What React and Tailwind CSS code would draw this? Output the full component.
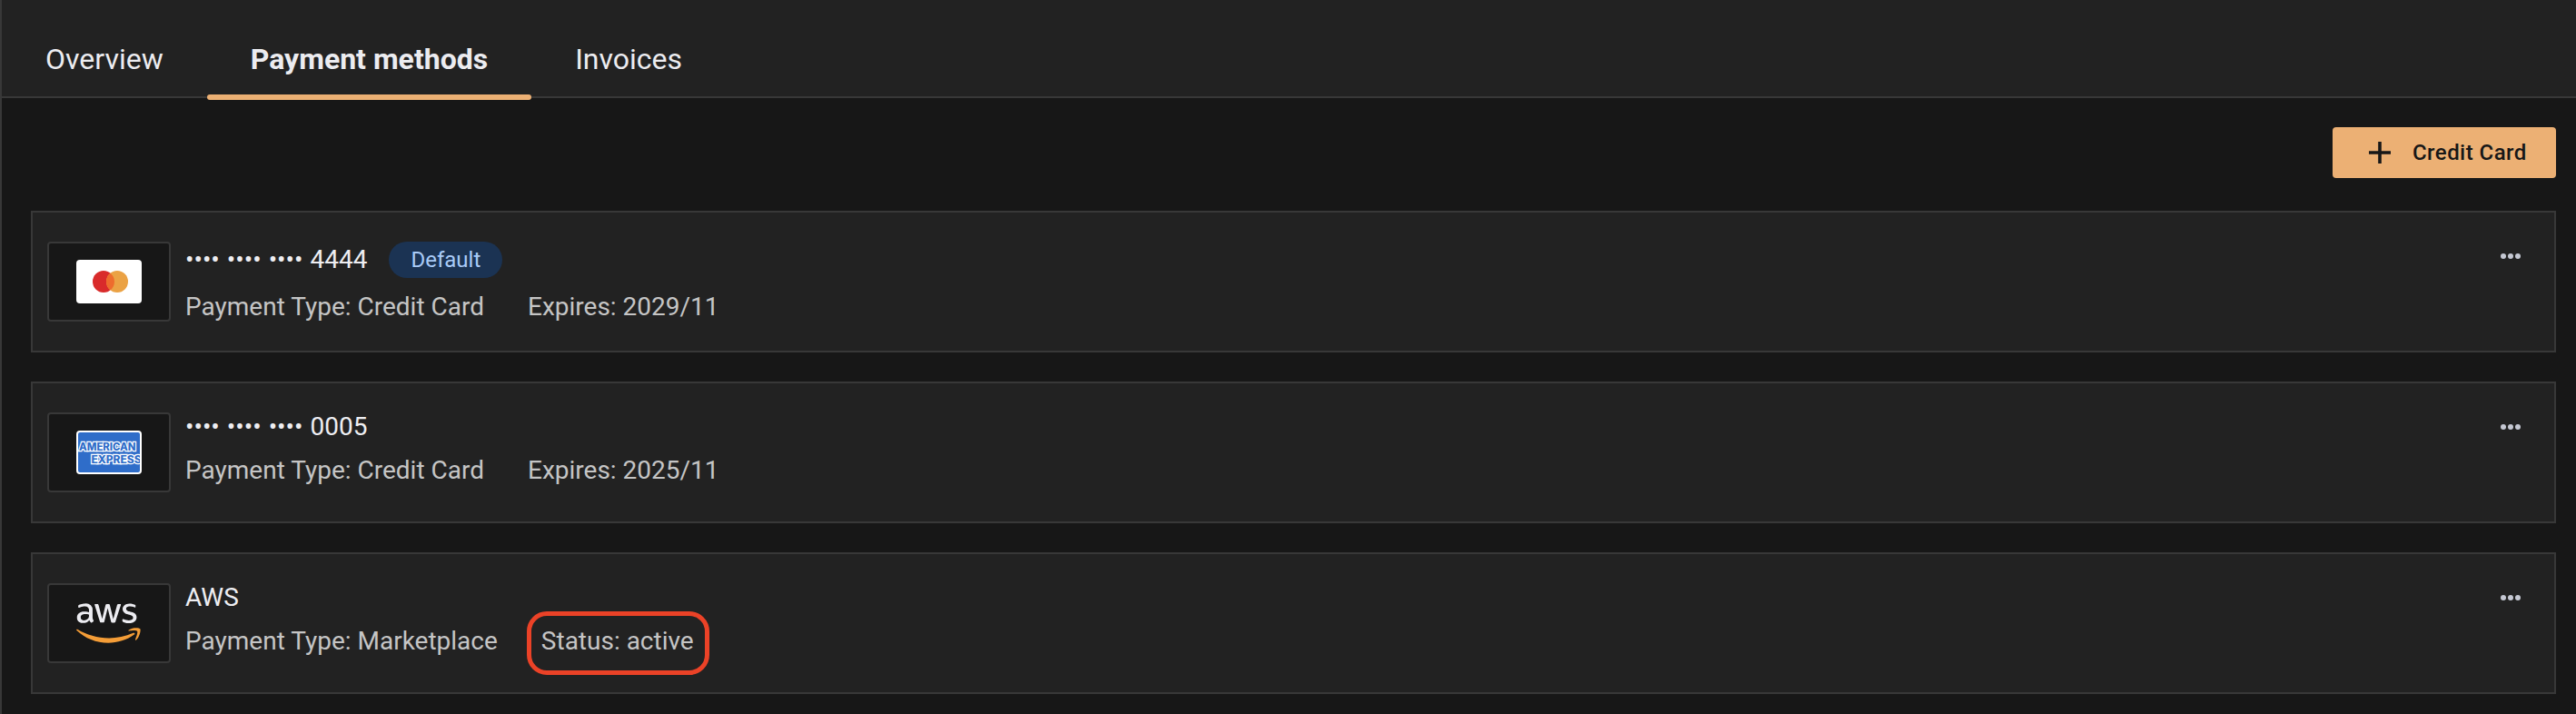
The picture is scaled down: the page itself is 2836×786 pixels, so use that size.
import { FaAws } from "react-icons/fa";

const tabs = [
  { label: "Overview", active: false },
  { label: "Payment methods", active: true },
  { label: "Invoices", active: false },
];

function MastercardLogo() {
  return (
    <svg width="72" height="48" viewBox="0 0 72 48">
      <rect width="72" height="48" rx="4" fill="#fff" />
      <circle cx="30" cy="24" r="12" fill="#d92b2b" />
      <circle cx="45" cy="24" r="12" fill="#eba244" />
      <path d="M37.5 14.63a12 12 0 0 1 0 18.74a12 12 0 0 1 0-18.74z" fill="#ee6c2d" />
    </svg>
  );
}

function AmexLogo() {
  return (
    <svg width="72" height="48" viewBox="0 0 72 48">
      <rect x="1" y="1" width="70" height="46" rx="3" fill="#2f6dc9" />
      <clipPath id="amex-clip">
        <rect x="2" y="2" width="68.5" height="44" />
      </clipPath>
      <g
        clipPath="url(#amex-clip)"
        fill="#2f6dc9"
        stroke="#fff"
        strokeWidth="2.4"
        paintOrder="stroke"
        fontFamily="Inter, sans-serif"
        fontWeight="800"
        fontSize="11.4"
      >
        <text x="3" y="21.9" textLength="62.5" lengthAdjust="spacingAndGlyphs">AMERICAN</text>
        <text x="16.5" y="35.6" textLength="55" lengthAdjust="spacingAndGlyphs">EXPRESS</text>
      </g>
      <rect x="1" y="1" width="70" height="46" rx="3" fill="none" stroke="#fff" strokeWidth="2" />
    </svg>
  );
}

function AwsLogo() {
  return (
    <svg width="72" height="48" viewBox="0 0 72 48">
      <linearGradient id="aws-fill" gradientUnits="userSpaceOnUse" x1="0" y1="0" x2="0" y2="512">
        <stop offset="0.555" stopColor="#ececf1" />
        <stop offset="0.555" stopColor="#ececf1" stopOpacity="0" />
      </linearGradient>
      <FaAws
        className="h-[55.2px] w-[71.7px]"
        x="-2.3"
        y="-4.5"
        preserveAspectRatio="none"
        fill="url(#aws-fill)"
      />
      <g fill="#f49d37" transform="translate(-0.3 1.7) scale(0.2345 0.243)">
        <path d="M273.5 143.7c-32.9 24.3-80.7 37.2-121.8 37.2-57.6 0-109.5-21.3-148.7-56.7-3.1-2.8-.3-6.6 3.4-4.4 42.4 24.6 94.7 39.5 148.8 39.5 36.5 0 76.6-7.6 113.5-23.2 5.5-2.5 10.2 3.6 4.8 7.6z" />
        <path d="M287.2 128.1c-4.2-5.4-27.8-2.6-38.5-1.3-3.2.4-3.7-2.4-.8-4.5 18.8-13.2 49.7-9.4 53.3-5 3.6 4.5-1 35.4-18.6 50.2-2.7 2.3-5.3 1.1-4.1-1.9 4-9.9 12.9-32.2 8.7-37.5z" />
      </g>
    </svg>
  );
}

const methods = [
  {
    name: "•••• •••• •••• 4444",
    badge: "Default",
    type: "Credit Card",
    detail: "Expires: 2029/11",
    logo: <MastercardLogo />,
  },
  {
    name: "•••• •••• •••• 0005",
    type: "Credit Card",
    detail: "Expires: 2025/11",
    logo: <AmexLogo />,
  },
  {
    name: "AWS",
    type: "Marketplace",
    detail: "Status: active",
    highlighted: true,
    logo: <AwsLogo />,
  },
];

function MethodCard({ method }) {
  return (
    <article className="flex h-[156px] border-2 border-[#383838] bg-[#222222] pl-4 pr-[37px] pt-8">
      <div className="flex h-[88px] w-[136px] items-center justify-center rounded border-2 border-[#383838] bg-[#171717]">
        {method.logo}
      </div>
      <div className="ml-4 flex flex-1 flex-col gap-3 text-[28px] text-[#c5c5c5]">
        <div className={method.badge ? "flex h-10 items-center gap-6" : "flex h-8 items-center"}>
          <span className="text-[#eeeef2] [word-spacing:1.1px]">{method.name}</span>
          {method.badge && (
            <span className="flex h-10 items-center rounded-full bg-[#1b3353] px-6 text-2xl text-[#a9cbf7]">
              {method.badge}
            </span>
          )}
        </div>
        <div className="flex h-10 items-center gap-12">
          <span>Payment Type: {method.type}</span>
          <span className="relative">
            {method.detail}
            {method.highlighted && (
              <span className="absolute -left-[16px] -top-[12px] h-[70px] w-[201px] rounded-[22px] border-[5px] border-[#eb4227]" />
            )}
          </span>
        </div>
      </div>
      <button className="mt-[13px] h-[6px]" aria-label="More">
        <svg width="22" height="6" viewBox="0 0 22 6" fill="#c5c8d3">
          <circle cx="3" cy="3" r="3" />
          <circle cx="11" cy="3" r="3" />
          <circle cx="19" cy="3" r="3" />
        </svg>
      </button>
    </article>
  );
}

export default function App() {
  return (
    <div className="h-[786px] w-[2836px] overflow-hidden border-l-2 border-[#383838] bg-[#171717] font-[Roboto,sans-serif]">
      <nav className="flex h-[108px] border-b-2 border-[#383838] bg-[#222222] text-[32px] text-[#ececf0]">
        {tabs.map((tab) => (
          <div key={tab.label} className="relative flex h-[108px] items-center px-12 pt-[22px]">
            <span className={tab.active ? "font-bold" : ""}>{tab.label}</span>
            {tab.active && <span className="absolute inset-x-0 -bottom-[2px] h-[6px] rounded-[3px] bg-[#ecb074]" />}
          </div>
        ))}
      </nav>
      <main className="pl-8 pr-[22px] pt-8">
        <div className="flex justify-end">
          <button className="flex h-14 w-[246px] items-center rounded bg-[#ecb074] pl-10 text-2xl font-medium tracking-[0.45px] text-[#171717]">
            <svg width="24" height="24" viewBox="0 0 24 24" stroke="#171717" strokeWidth="3.6">
              <path d="M12 0v24M0 12h24" />
            </svg>
            <span className="ml-6">Credit Card</span>
          </button>
        </div>
        <section className="mt-9 flex flex-col gap-8">
          {methods.map((method) => (
            <MethodCard key={method.detail} method={method} />
          ))}
        </section>
      </main>
    </div>
  );
}
